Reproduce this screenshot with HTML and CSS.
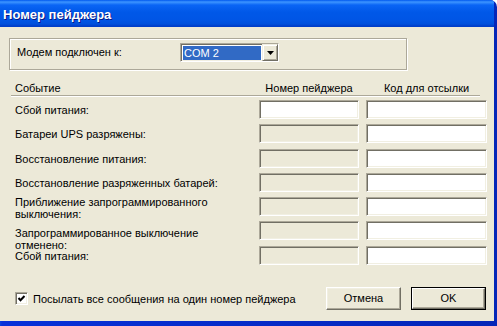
FILE: index.html
```html
<!DOCTYPE html>
<html>
<head>
<meta charset="utf-8">
<link rel="stylesheet" href="styles.css">
</head>
<body>
<div class="window">
  <div class="titlebar">Номер пейджера</div>
  <div class="pane">
    <div class="group">
      <span class="group-label">Модем подключен к:</span>
      <div class="combo">
        <div class="combo-value">COM 2</div>
        <div class="combo-btn">
          <svg width="7" height="4" viewBox="0 0 7 4"><polygon points="0,0 7,0 3.5,4" fill="#000"/></svg>
        </div>
      </div>
    </div>

    <div class="events-head">
      <span class="h-event">Событие</span>
      <span class="h-col">Номер пейджера</span>
      <span class="h-col">Код для отсылки</span>
    </div>
    <div class="rule"></div>

    <div class="events">
      <div class="lbl">Сбой питания:</div>
      <div class="field"></div>
      <div class="field"></div>

      <div class="lbl">Батареи UPS разряжены:</div>
      <div class="field disabled"></div>
      <div class="field"></div>

      <div class="lbl">Восстановление питания:</div>
      <div class="field disabled"></div>
      <div class="field"></div>

      <div class="lbl">Восстановление разряженных батарей:</div>
      <div class="field disabled"></div>
      <div class="field"></div>

      <div class="lbl two up">Приближение запрограммированного<br>выключения:</div>
      <div class="field disabled"></div>
      <div class="field"></div>

      <div class="lbl two down">Запрограммированное выключение<br>отменено:</div>
      <div class="field disabled"></div>
      <div class="field"></div>

      <div class="lbl">Сбой питания:</div>
      <div class="field disabled"></div>
      <div class="field"></div>
    </div>

    <div class="footer">
      <label class="check">
        <span class="box">
          <svg width="9" height="9" viewBox="0 0 9 9"><polyline points="1.5,4 3.5,6.2 7.5,2" fill="none" stroke="#000" stroke-width="2"/></svg>
        </span>
        <span>Посылать все сообщения на один номер пейджера</span>
      </label>
      <div class="buttons">
        <div class="btn">Отмена</div>
        <div class="btn default"><div class="btn-inner">OK</div></div>
      </div>
    </div>
  </div>
</div>
</body>
</html>
```

FILE: styles.css
```css
html, body {
  margin: 0;
  padding: 0;
}
body {
  width: 497px;
  height: 326px;
  overflow: hidden;
  font-family: "Liberation Sans", Arial, sans-serif;
  font-size: 11px;
  color: #000;
}
.window {
  width: 497px;
  height: 326px;
  box-sizing: border-box;
  padding-right: 3px;
  padding-bottom: 5px;
  background: linear-gradient(to right, #0a44e0, #0831d9 2px, #0526b8);
  border-top-right-radius: 7px;
  display: flex;
  flex-direction: column;
  overflow: hidden;
}
.titlebar {
  height: 27px;
  box-sizing: border-box;
  padding: 2px 0 0 3px;
  line-height: 25px;
  font-weight: bold;
  font-size: 13px;
  color: #fff;
  text-shadow: 1px 1px 0 #0a1883;
  background: linear-gradient(to bottom, #0058ee 0, #3d95ff 2px, #0a65f5 5px, #0058e8 12px, #0055e5 20px, #0050dc 24px, #003ec9 26px);
  flex: 0 0 auto;
}
.pane {
  flex: 1;
  background: #ece9d8;
  display: flex;
  flex-direction: column;
}
.group {
  margin: 11px 0 0 9px;
  width: 398px;
  height: 32px;
  box-sizing: border-box;
  border: 1px solid #aca899;
  box-shadow: inset 1px 1px 0 #fff, 1px 1px 0 #fff;
  display: flex;
  align-items: flex-start;
  padding-top: 4px;
}
.group-label {
  flex: 0 0 163px;
  padding-left: 7px;
  line-height: 19px;
}
.combo {
  width: 99px;
  height: 19px;
  box-sizing: border-box;
  border: 1px solid;
  border-color: #aca899 #fff #fff #aca899;
  box-shadow: inset 1px 1px 0 #716f64, inset -1px -1px 0 #f1efe2;
  padding: 2px 1px 1px 2px;
  background: #fff;
  display: flex;
}
.combo-value {
  flex: 1;
  background: #316ac5;
  color: #fff;
  line-height: 14px;
  padding-left: 1px;
  margin-right: 1px;
}
.combo-btn {
  width: 16px;
  margin: -2px -1px -1px 0;
  box-sizing: border-box;
  background: #ece9d8;
  border: 1px solid;
  border-color: #f1efe2 #716f64 #716f64 #f1efe2;
  box-shadow: inset 1px 1px 0 #fff, inset -1px -1px 0 #aca899;
  display: flex;
  align-items: center;
  justify-content: center;
}
.events-head {
  margin: 12px 0 0 11px;
  display: grid;
  grid-template-columns: 241px 100px 121px;
  column-gap: 7px;
  line-height: 13px;
  height: 13px;
}
.h-event {
  padding-left: 4px;
}
.h-col {
  text-align: center;
}
.rule {
  margin-left: 11px;
  width: 469px;
  height: 1px;
  background: #aca899;
  box-shadow: 0 1px 0 #fff;
}
.events {
  margin: 4px 0 0 11px;
  display: grid;
  grid-template-columns: 241px 100px 121px;
  grid-template-rows: 24px 25px 24px 24px 24px 25px 19px;
  column-gap: 7px;
}
.lbl {
  padding: 4px 0 0 4px;
  line-height: 13px;
  white-space: nowrap;
}
.lbl.two {
  line-height: 12px;
}
.lbl.up {
  padding-top: 0;
  margin-top: -1px;
}
.lbl.down {
  padding-top: 6px;
}
.field {
  height: 19px;
  box-sizing: border-box;
  border: 1px solid;
  border-color: #aca899 #fff #fff #aca899;
  box-shadow: inset 1px 1px 0 #716f64, inset -1px -1px 0 #f1efe2;
  background: #fff;
}
.field.disabled {
  background: #ece9d8;
}
.footer {
  margin-top: 22px;
  display: flex;
  align-items: center;
  justify-content: space-between;
  padding: 0 8px 0 15px;
}
.check {
  display: flex;
  align-items: center;
  gap: 5px;
}
.box {
  width: 13px;
  height: 13px;
  box-sizing: border-box;
  border: 1px solid;
  border-color: #aca899 #fff #fff #aca899;
  box-shadow: inset 1px 1px 0 #716f64, inset -1px -1px 0 #f1efe2;
  background: #fff;
  display: flex;
  align-items: center;
  justify-content: center;
}
.box svg {
  display: block;
}
.buttons {
  display: flex;
  gap: 10px;
}
.btn {
  width: 75px;
  height: 23px;
  box-sizing: border-box;
  border: 1px solid;
  border-color: #fff #716f64 #716f64 #fff;
  box-shadow: inset -1px -1px 0 #aca899, inset 1px 1px 0 #f1efe2;
  background: #ece9d8;
  text-align: center;
  line-height: 21px;
}
.btn.default {
  border: 1px solid #000;
  box-shadow: none;
  padding: 0;
}
.btn-inner {
  height: 21px;
  box-sizing: border-box;
  border: 1px solid;
  border-color: #fff #716f64 #716f64 #fff;
  box-shadow: inset -1px -1px 0 #aca899;
  line-height: 19px;
}
```
